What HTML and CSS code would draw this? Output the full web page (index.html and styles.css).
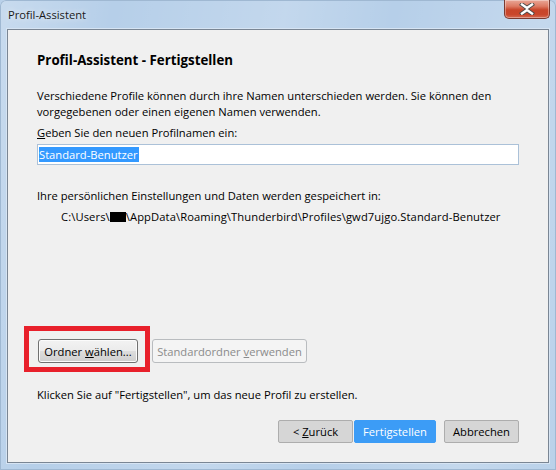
FILE: index.html
```html
<!DOCTYPE html>
<html lang="de">
<head>
<meta charset="utf-8">
<title>Profil-Assistent</title>
<link rel="stylesheet" href="styles.css">
</head>
<body>
<div class="window">
  <div class="titlebar">
    <span class="title">Profil-Assistent</span>
    <button class="close" aria-label="Schließen">
      <svg width="16" height="12" viewBox="0 0 16 12">
        <path d="M3 1.5 L8 5 L13 1.5 M3 10.5 L8 7 L13 10.5" fill="none" stroke="#4a4a4a" stroke-width="4.2" stroke-linecap="square"/>
        <path d="M3 1.5 L8 5 L13 1.5 M3 10.5 L8 7 L13 10.5" fill="none" stroke="#ffffff" stroke-width="2.4" stroke-linecap="square"/>
      </svg>
    </button>
  </div>
  <div class="client">
    <h1 class="heading">Profil-Assistent - Fertigstellen</h1>
    <p class="intro">Verschiedene Profile können durch ihre Namen unterschieden werden. Sie können den<br>vorgegebenen oder einen eigenen Namen verwenden.</p>
    <label class="label" for="profile-name"><u>G</u>eben Sie den neuen Profilnamen ein:</label>
    <div class="field" id="profile-name"><span class="selected">Standard-Benutzer</span></div>
    <p class="info">Ihre persönlichen Einstellungen und Daten werden gespeichert in:</p>
    <p class="path">C:\Users\<span class="redacted"></span>\AppData\Roaming\Thunderbird\Profiles\gwd7ujgo.Standard-Benutzer</p>
    <div class="spacer"></div>
    <div class="folder-row">
      <button class="btn btn-choose">Ordner <u>w</u>ählen...</button>
      <button class="btn btn-disabled" disabled>Standardordner <u>v</u>erwenden</button>
      <div class="highlight"></div>
    </div>
    <p class="finish">Klicken Sie auf "Fertigstellen", um das neue Profil zu erstellen.</p>
    <div class="footer">
      <button class="fbtn">&lt; <u>Z</u>urück</button>
      <button class="fbtn fbtn-primary">Fertigstellen</button>
      <button class="fbtn fbtn-cancel">Abbrechen</button>
    </div>
  </div>
</div>
</body>
</html>
```
FILE: styles.css
```css
* {
  box-sizing: border-box;
}

html, body {
  margin: 0;
  padding: 0;
  background: #b9d1ea;
}

body {
  font-family: "Open Sans", "Noto Sans", sans-serif;
  font-size: 11.2px;
  color: #000;
}

.window {
  width: 556px;
  height: 470px;
  display: flex;
  flex-direction: column;
  padding: 0 7px 7px 7px;
  border-radius: 6px 6px 0 0;
  background:
    linear-gradient(100deg, rgba(255,255,255,0.25) 0%, rgba(255,255,255,0) 18%, rgba(255,255,255,0.18) 45%, rgba(255,255,255,0) 62%, rgba(255,255,255,0.2) 85%, rgba(255,255,255,0.05) 100%),
    #b6cfe9;
  box-shadow: inset 0 0 0 1px #9fb8d2;
}

/* title bar */
.titlebar {
  height: 29px;
  flex: none;
  display: flex;
  align-items: flex-start;
  justify-content: space-between;
}

.title {
  margin: 7px 0 0 1px;
  font-size: 11.2px;
  line-height: 16px;
  color: #1a1a1a;
  text-shadow: 0 0 6px rgba(255,255,255,0.9);
}

.close {
  width: 46px;
  height: 19px;
  margin: 0 -1px 0 0;
  padding: 0;
  border: 1px solid #7a3a30;
  border-top: none;
  border-radius: 0 0 5px 5px;
  background: linear-gradient(#e9a797 0%, #dd7a63 35%, #c8452a 55%, #c9462b 80%, #d46a52 100%);
  box-shadow: inset 0 0 0 1px rgba(255,255,255,0.35);
  display: flex;
  align-items: center;
  justify-content: center;
}

.close svg {
  display: block;
}

/* dialog body */
.client {
  flex: 1;
  display: flex;
  flex-direction: column;
  background: #f0f0f0;
  border: 1px solid #7a8694;
  box-shadow: 0 0 0 1px #d6e4f3;
  padding: 22px 29px 19px 29px;
}

.heading {
  margin: 0;
  font-size: 13.3px;
  font-weight: 700;
  line-height: 16px;
}

.intro,
.info,
.path,
.finish,
.label {
  margin: 0;
  line-height: 16px;
  white-space: nowrap;
}

.intro {
  margin-top: 20px;
}

.label {
  display: block;
  margin-top: 5px;
}

u {
  text-decoration: underline;
  text-underline-offset: 1px;
}

.field {
  margin-top: 3px;
  height: 21px;
  background: #fff;
  border: 1px solid #abc1d8;
  padding: 2px 1px;
  line-height: 15px;
}

.selected {
  display: inline-block;
  background: #3399ff;
  color: #fff;
  line-height: 15px;
  padding-right: 1px;
}

.info {
  margin-top: 23px;
}

.path {
  margin-top: 5px;
  padding-left: 24px;
  letter-spacing: 0.1px;
}

.redacted {
  display: inline-block;
  width: 16px;
  height: 10px;
  background: #000;
  vertical-align: -1px;
}

.spacer {
  flex: 1;
}

.folder-row {
  display: flex;
  gap: 14px;
  height: 24px;
  position: relative;
  padding-left: 1px;
}

.btn {
  font: inherit;
  height: 24px;
  padding: 0;
  border-radius: 3px;
  white-space: nowrap;
}

.btn-choose {
  width: 100px;
  color: #000;
  border: 1px solid #707070;
  background: linear-gradient(#f2f2f2 0%, #ebebeb 50%, #dddddd 51%, #cfcfcf 100%);
  box-shadow: inset 0 0 0 1px #fbfbfb;
}

.btn-disabled {
  width: 155px;
  color: #8b8b8b;
  border: 1px solid #b9bcbf;
  background: #f4f4f4;
}

/* red annotation frame drawn over the button */
.highlight {
  position: absolute;
  left: -13px;
  top: -13px;
  width: 126px;
  height: 46px;
  border: 5px solid #e8202b;
  pointer-events: none;
}

.finish {
  margin-top: 24px;
}

.footer {
  margin-top: 17px;
  display: flex;
  justify-content: flex-end;
}

.fbtn {
  font: inherit;
  height: 23px;
  width: 75px;
  padding: 0;
  border: 1px solid #adadad;
  border-radius: 2px;
  background: #d6d6d6;
  color: #000;
}

.fbtn-primary {
  width: 82px;
  margin-left: 1px;
  border-color: #3c9cf6;
  background: #3c9cf6;
  color: #fff;
}

.fbtn-cancel {
  margin-left: 8px;
}
```
